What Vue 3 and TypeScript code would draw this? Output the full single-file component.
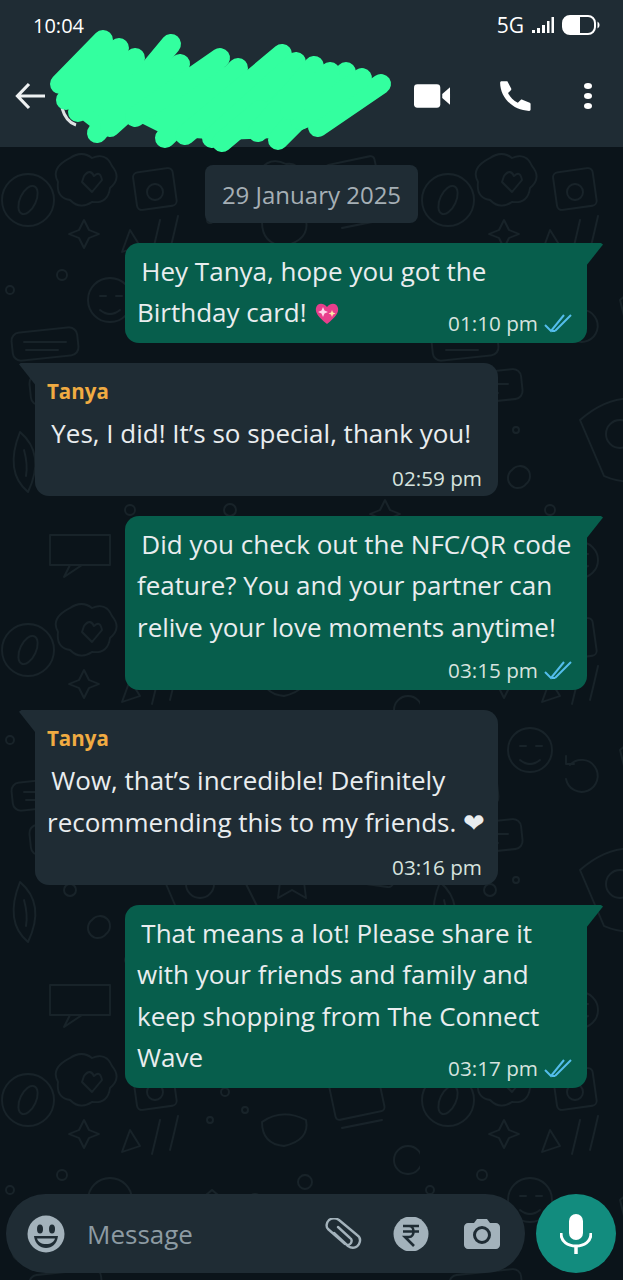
<script setup lang="ts">
interface Message {
  id: number
  mine: boolean
  name?: string
  lines: string[]
  time: string
  inlineTime?: boolean
  sparkle?: boolean
}

const messages: Message[] = [
  { id: 1, mine: true, lines: ['\u2009Hey Tanya, hope you got the', 'Birthday card! '], time: '01:10 pm', inlineTime: true, sparkle: true },
  { id: 2, mine: false, name: 'Tanya', lines: ['\u2009Yes, I did! It’s so special, thank you!'], time: '02:59 pm' },
  { id: 3, mine: true, lines: ['\u2009Did you check out the NFC/QR code', 'feature? You and your partner can', 'relive your love moments anytime!'], time: '03:15 pm' },
  { id: 4, mine: false, name: 'Tanya', lines: ['\u2009Wow, that’s incredible! Definitely', 'recommending this to my friends. ❤'], time: '03:16 pm' },
  { id: 5, mine: true, lines: ['\u2009That means a lot! Please share it', 'with your friends and family and', 'keep shopping from The Connect', 'Wave'], time: '03:17 pm', inlineTime: true }
]

// the hand-drawn marker strokes over the contact name
const markerBody = '60,84 103,50 135,62 165,76 175,86 220,66 250,74 282,64 292,76 373,82 318,124 278,138 222,140 167,136 131,118 95,130 72,112'
const markerStrokes = [
  [60, 84, 103, 40], [66, 100, 119, 48], [78, 112, 135, 58], [97, 133, 171, 44], [110, 127, 180, 64],
  [135, 117, 220, 58], [165, 138, 238, 68], [185, 135, 282, 54], [212, 138, 296, 62], [222, 142, 260, 110],
  [258, 132, 314, 66], [278, 140, 346, 72], [318, 127, 381, 84], [300, 120, 362, 78], [290, 110, 330, 72]
]
</script>

<template>
  <div class="phone">
    <svg class="wallpaper" width="623" height="1280" aria-hidden="true">
      <defs>
        <pattern id="doodles" width="420" height="450" patternUnits="userSpaceOnUse" x="0" y="150">
          <g fill="none" stroke="#182329" stroke-width="1.800" stroke-linejoin="round" stroke-linecap="round">
            <circle cx="28" cy="50" r="26" />
            <ellipse cx="28" cy="50" rx="8" ry="15" transform="rotate(25 28 50)" />
            <path d="M70 8 q12 -8 22 0 q14 -6 20 8 q10 12 -2 22 q-2 16 -18 14 q-12 8 -22 -2 q-14 -2 -12 -18 q-8 -14 12 -24z" />
            <path d="M84 26 q6 -8 10 0 q6 -6 8 4 l-10 12 l-10 -10z" />
            <rect x="135" y="20" width="40" height="38" rx="5" transform="rotate(-8 155 40)" />
            <circle cx="155" cy="42" r="8" />
            <path d="M84 70 l5 10 l10 4 l-10 4 l-5 10 l-5 -10 l-10 -4 l10 -4z" />
            <path d="M130 80 l-8 22 l18 -6z" />
            <path d="M160 70 q-4 18 -8 34 M178 66 q-4 18 -8 34" />
            <rect x="330" y="10" width="50" height="56" rx="4" transform="rotate(-12 355 38)" />
            <path d="M342 78 l40 -8" />
            <circle cx="225" cy="42" r="4" />
            <circle cx="245" cy="60" r="3" />
            <circle cx="210" cy="70" r="3" />
            <path d="M260 20 q10 -14 26 -6 q14 -2 12 12 q-4 12 -18 8 q-16 8 -20 -14z" />
            <path d="M262 72 q20 -14 44 -2 q4 20 -22 26 q-22 -2 -22 -24z" />
            <circle cx="62" cy="125" r="5" />
            <circle cx="408" cy="110" r="14" />
            <circle cx="110" cy="150" r="22" />
            <path d="M100 146 h6 M116 146 h6 M100 160 q10 8 20 0" />
            <rect x="12" y="180" width="66" height="28" rx="8" transform="rotate(-6 45 194)" />
            <path d="M24 192 h42 M26 200 h32" />
            <rect x="30" y="222" width="72" height="30" rx="8" transform="rotate(-6 66 237)" />
            <path d="M44 234 h44 M46 243 h32" />
            <path d="M150 165 a16 16 0 1 1 -4 14 M146 156 v8 h8" />
            <path d="M200 150 l12 -10 l12 10 l-4 16 h-16z" />
            <circle cx="255" cy="150" r="6" />
            <circle cx="282" cy="170" r="5" />
            <circle cx="305" cy="132" r="7" />
            <circle cx="340" cy="160" r="3" />
            <path d="M360 150 l6 12 l12 3 l-9 9 l2 12 l-11 -6 l-11 6 l2 -12 l-9 -9 l12 -3z" />
            <path d="M160 270 q34 -30 70 -18 l30 60 q-40 30 -76 14z" />
            <circle cx="200" cy="284" r="14" />
            <path d="M292 250 l8 16 l16 4 l-12 12 l2 16 l-14 -8 l-14 8 l2 -16 l-12 -12 l16 -4z" />
            <path d="M20 282 q26 22 8 60 q-24 -20 -8 -60z M24 300 q4 14 2 26" />
            <circle cx="70" cy="290" r="6" />
            <circle cx="96" cy="280" r="3" />
            <path d="M92 320 a10 10 0 1 1 14 14 a10 10 0 1 1 -14 -14z" />
            <circle cx="130" cy="360" r="5" />
            <circle cx="230" cy="360" r="6" />
            <circle cx="10" cy="140" r="4" />
            <rect x="340" y="240" width="56" height="44" rx="5" transform="rotate(8 368 262)" />
            <path d="M355 256 l-8 8 l8 8 M380 256 l8 8 l-8 8 M372 254 l-8 20" />
            <path d="M50 385 h60 v30 h-60z M70 415 l-6 12 l18 -12" />
            <circle cx="160" cy="410" r="18" />
            <path d="M152 404 h4 M164 404 h4 M152 416 q8 6 16 0" />
            <path d="M230 400 l40 -24 l10 18 l-40 24z" />
            <circle cx="320" cy="400" r="22" />
            <path d="M320 386 v14 l10 8" />
            <path d="M385 350 l5 10 l10 4 l-10 4 l-5 10 l-5 -10 l-10 -4 l10 -4z" />
          </g>
        </pattern>
      </defs>
      <rect width="623" height="1280" fill="url(#doodles)" />
    </svg>

    <header class="topbar">
      <div class="status">
        <span class="clock">10:04</span>
        <div class="status-right">
          <span class="network">5G</span>
          <svg width="22" height="16" viewBox="0 0 22 16" fill="#fff">
            <rect x="0" y="13" width="3" height="3" />
            <rect x="5" y="11" width="3" height="5" />
            <rect x="10" y="8" width="3" height="8" />
            <rect x="15" y="4" width="2.5" height="12" />
            <rect x="19.5" y="0" width="2.5" height="16" />
          </svg>
          <svg width="38" height="20" viewBox="0 0 38 20">
            <rect x="1" y="1" width="32" height="18" rx="7" fill="none" stroke="#fff" stroke-width="2" />
            <path d="M8 1 h10 v18 h-10 a7 7 0 0 1 -7 -7 v-4 a7 7 0 0 1 7 -7z" fill="#fff" />
            <path d="M35.500 6.500 a4 4 0 0 1 0 7z" fill="#fff" />
          </svg>
        </div>
      </div>
      <div class="toolbar">
        <svg class="back" width="30" height="28" viewBox="0 0 30 28" fill="none" stroke="#eef1f2" stroke-width="3.200">
          <path d="M30 14 H3 M14 2 L2.500 14 L14 26" />
        </svg>
        <div class="contact"></div>
        <svg class="video" width="37" height="24" viewBox="0 0 38 24" fill="#fff">
          <rect x="0" y="0" width="27" height="24" rx="3.500" />
          <path d="M29 10 L37 3 V21 L29 14z" />
        </svg>
        <svg class="call" width="34" height="34" viewBox="0 0 24 24" fill="#fff">
          <path d="M6.600 1.500 l2.700 5.200 c.2.400.1.900-.2 1.200 l-2 2 c1.500 3 3.900 5.400 6.900 6.900 l2-2 c.3-.3.800-.4 1.200-.2 l5.200 2.200 c.4.200.6.500.6.900 v3.800 c0 .6-.5 1-1 1 C10.800 22.500 1.500 13 1.500 2.600 c0-.6.400-1.100 1-1.100z" />
        </svg>
        <div class="dots"><i></i><i></i><i></i></div>
      </div>
      <svg class="redaction" width="400" height="160" viewBox="0 0 400 160" aria-hidden="true">
        <path d="M62 108 Q66 122 76 125" fill="none" stroke="#dfe3e4" stroke-width="3" />
        <polygon :points="markerBody" fill="#33ff9f" />
        <line
          v-for="(s, i) in markerStrokes"
          :key="i"
          :x1="s[0]"
          :y1="s[1]"
          :x2="s[2]"
          :y2="s[3]"
          stroke="#33ff9f"
          stroke-width="20"
          stroke-linecap="round"
        />
      </svg>
    </header>

    <main class="chat">
      <div class="date">29 January 2025</div>
      <div v-for="msg in messages" :key="msg.id" class="row" :class="msg.mine ? 'mine' : 'theirs'">
        <div class="bubble">
          <div v-if="msg.name" class="name">{{ msg.name }}</div>
          <div v-for="(line, i) in msg.lines" :key="line" class="line">{{ line }}<svg v-if="msg.sparkle && i === msg.lines.length - 1" class="sparkle" width="28" height="27" viewBox="0 0 28 27">
              <path d="M14 25 C5 18 2 13 3 9 C4 4 10 3 14 8 C18 3 24 4 25 9 C26 13 23 18 14 25z" fill="#e83e8c" />
              <path d="M10 8 l1.500 3.500 3.500 1.500 -3.500 1.500 -1.500 3.500 -1.500 -3.500 -3.500 -1.500 3.500 -1.500z" fill="#ffd6ea" />
              <path d="M19 11 l1 2.500 2.500 1 -2.500 1 -1 2.500 -1 -2.500 -2.500 -1 2.500 -1z" fill="#ffe9a8" />
            </svg></div>
          <div class="meta" :class="{ inline: msg.inlineTime }">
            <span class="time">{{ msg.time }}</span>
            <svg v-if="msg.mine" class="ticks" width="28" height="20" viewBox="0 0 28 20" fill="none" stroke="#53bdeb" stroke-width="2">
              <path d="M1 12 L7 18 L20 2 M11 18 L27 2 M8 18 L11 18" />
            </svg>
          </div>
        </div>
      </div>
    </main>

    <footer class="composer">
      <div class="input">
        <svg class="smile" width="38" height="38" viewBox="0 0 38 38">
          <circle cx="19" cy="19" r="18.500" fill="#a3b2bb" />
          <ellipse cx="13" cy="14" rx="3" ry="4.500" fill="#1f2c34" />
          <ellipse cx="25" cy="14" rx="3" ry="4.500" fill="#1f2c34" />
          <path d="M7 21 H31 C30 29 25 33 19 33 C13 33 8 29 7 21z" fill="#1f2c34" />
          <path d="M10 23.500 H28 C27 27 24 29 19 29 C14 29 11 27 10 23.500z" fill="#a3b2bb" />
        </svg>
        <span class="placeholder">Message</span>
        <svg class="clip" width="38" height="32" viewBox="0 0 38 32" fill="none" stroke="#a3b2bb" stroke-width="2.400" stroke-linecap="round">
          <path d="M10 15 L24 28 C28 31 33 30 35 26 C37 22 36 19 33 17 L15 2 C12 0 8 0 5 2 C2 5 2 9 4 11 L21 26 C23 27 26 27 27 25 C28 23 28 21 26 20 L14 9" />
        </svg>
        <svg class="rupee" width="36" height="34" viewBox="0 0 36 34">
          <circle cx="18" cy="17" r="17.500" fill="#a3b2bb" />
          <path d="M10 9 H26 M10 14.500 H26 M12 9 H16 C22 9 22 20 16 20 H12 L21 29" fill="none" stroke="#1f2c34" stroke-width="2.600" />
        </svg>
        <svg class="camera" width="36" height="30" viewBox="0 0 36 30">
          <path d="M4 4 H10 L13 0 H23 L26 4 H32 C34 4 36 6 36 8 V26 C36 28 34 30 32 30 H4 C2 30 0 28 0 26 V8 C0 6 2 4 4 4z" fill="#a3b2bb" />
          <circle cx="18" cy="16" r="7.500" fill="none" stroke="#1f2c34" stroke-width="3" />
        </svg>
      </div>
      <button class="mic" type="button" aria-label="Record">
        <svg width="32" height="40" viewBox="0 0 32 40" fill="none">
          <rect x="9" y="0" width="14" height="26" rx="7" fill="#fff" />
          <path d="M1 19 C1 28 8 32 16 32 C24 32 31 28 31 19" stroke="#fff" stroke-width="3" />
          <path d="M16 32 V40" stroke="#fff" stroke-width="3.500" />
        </svg>
      </button>
    </footer>
  </div>
</template>

<style>
html, body {
  margin: 0;
  background: #0b141a;
}
</style>

<style scoped>
.phone {
  position: relative;
  width: 623px;
  height: 1280px;
  overflow: hidden;
  display: flex;
  flex-direction: column;
  background: #0b141a;
  font-family: "Open Sans", "Noto Sans", sans-serif;
  color: #e9edef;
}

.wallpaper {
  position: absolute;
  left: 0;
  top: 0;
}

.topbar {
  position: relative;
  height: 147px;
  flex: none;
  background: #1f2c34;
  z-index: 1;
}

.status {
  display: flex;
  justify-content: space-between;
  align-items: center;
  height: 32px;
  padding: 9px 23px 0 33px;
}

.clock {
  font-size: 20px;
  color: #fff;
}

.status-right {
  display: flex;
  align-items: center;
  gap: 8px;
}

.network {
  font-size: 21px;
  color: #fff;
}

.toolbar {
  display: flex;
  align-items: center;
  height: 64px;
  margin-top: 23px;
  padding: 0 31px 0 15px;
}

.contact {
  flex: 1;
}

.call {
  margin-left: 47px;
}

.dots {
  display: flex;
  flex-direction: column;
  gap: 4px;
  margin-left: 52px;
}

.dots i {
  width: 8px;
  height: 6px;
  border-radius: 50%;
  background: #fff;
  display: block;
}

.redaction {
  position: absolute;
  left: 0;
  top: 0;
}

.chat {
  position: relative;
  display: flex;
  flex-direction: column;
  gap: 19.75px;
  padding: 18px 0 0;
}

.date {
  align-self: center;
  height: 58px;
  line-height: 60px;
  padding: 0 17px;
  border-radius: 8px;
  background: #1f2c34;
  color: #a5afb5;
  font-size: 24px;
}

.row {
  display: flex;
}

.mine {
  justify-content: flex-end;
  padding-right: 36px;
}

.theirs {
  padding-left: 35px;
}

.bubble {
  position: relative;
  box-sizing: border-box;
  width: 463px;
  padding: 8px 15px 5px 12px;
  border-radius: 14px;
  font-size: 26px;
  line-height: 41.5px;
}

.mine .bubble {
  width: 462px;
  background: #075e4c;
  border-top-right-radius: 0;
}

.theirs .bubble {
  padding-right: 16px;
  padding-bottom: 3px;
  background: #1f2c34;
  border-top-left-radius: 0;
}

.bubble::after {
  content: "";
  position: absolute;
  top: 0;
  width: 16px;
  height: 22px;
}

.mine .bubble::after {
  left: 100%;
  background: #075e4c;
  clip-path: polygon(0 0, 85% 0, 100% 8%, 0 100%);
}

.theirs .bubble::after {
  right: 100%;
  background: #1f2c34;
  clip-path: polygon(100% 0, 15% 0, 0 8%, 100% 100%);
}

.name {
  color: #f0ab42;
  font-size: 20.5px;
  font-weight: 700;
  height: 42px;
}

.line {
  white-space: pre;
}

.sparkle {
  vertical-align: -4px;
}

.meta {
  display: flex;
  justify-content: flex-end;
  align-items: center;
  gap: 6px;
  height: 30px;
  margin-top: 7px;
  font-size: 20.7px;
  line-height: 30px;
  color: #d6e3df;
}

.theirs .meta {
  margin-top: 9px;
}

.meta.inline {
  margin-top: -26px;
}

.composer {
  position: relative;
  display: flex;
  justify-content: space-between;
  margin-top: auto;
  padding: 0 7px 7px 6px;
}

.input {
  display: flex;
  align-items: center;
  box-sizing: border-box;
  width: 519px;
  height: 79px;
  padding: 0 25px 0 21px;
  border-radius: 40px;
  background: #1f2c34;
}

.placeholder {
  flex: 1;
  margin-left: 22px;
  color: #8d9ba3;
  font-size: 26px;
}

.rupee {
  margin-left: 31px;
}

.camera {
  margin-left: 35px;
}

.mic {
  display: flex;
  align-items: center;
  justify-content: center;
  width: 80px;
  height: 79px;
  padding: 0;
  border: 0;
  border-radius: 50%;
  background: #128c7e;
}
</style>
